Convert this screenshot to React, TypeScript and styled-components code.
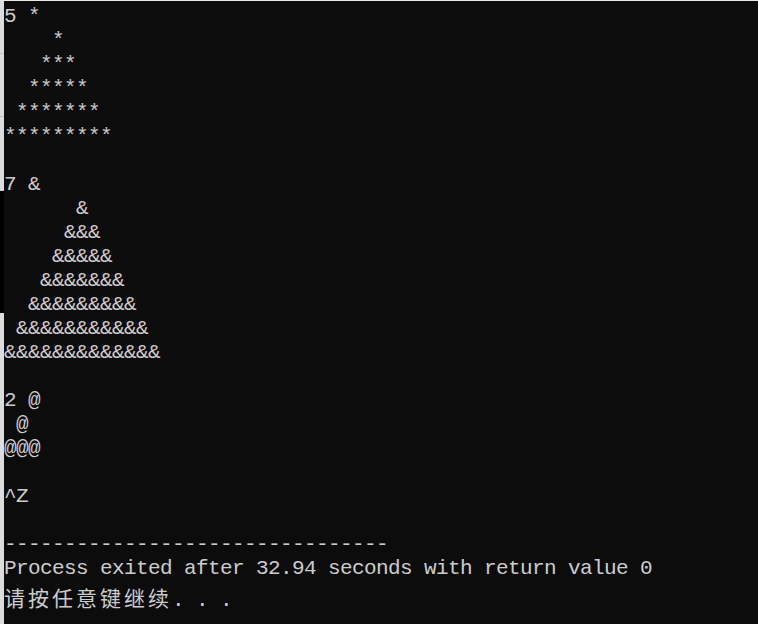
import React from "react";
import styled, { createGlobalStyle } from "styled-components";

const Global = createGlobalStyle`
  html, body { margin: 0; padding: 0; background: #0c0c0c; }
  body { width: 758px; height: 624px; overflow: hidden; }
`;

const Screen = styled.div`
  width: 758px;
  height: 624px;
  display: flex;
  flex-direction: column;
  background: #0c0c0c;
`;

const TopEdge = styled.div`
  height: 1px;
  background: #e8e8e8;
  flex: none;
`;

const Body = styled.div`
  flex: 1;
  display: flex;
  min-height: 0;
`;

const Strip = styled.div`
  width: 4px;
  flex: none;
  display: flex;
  flex-direction: column;
`;

const StripPart = styled.div<{ $h: number; $dark?: boolean }>`
  height: ${(p) => p.$h}px;
  flex: none;
  background: ${(p) => (p.$dark ? "#000000" : "#dcdcdc")};
  border-bottom: ${(p) => (p.$dark ? "none" : "1px solid #c4c4c4")};
  box-sizing: border-box;
`;

const StripRest = styled.div`
  flex: 1;
  background: #dcdcdc;
`;

const Console = styled.div`
  flex: 1;
  background: #0c0c0c;
  padding: 4px 0 0 0;
  color: #cccccc;
  font-family: "Liberation Mono", "Noto Sans CJK SC", monospace;
  font-size: 21px;
  letter-spacing: -0.6px;
`;

const Line = styled.div<{ $shift?: number }>`
  height: 24px;
  line-height: 24px;
  white-space: pre;
  margin-top: ${(p) => p.$shift ?? 0}px;
`;

const Wide = styled.span`
  font-family: "Noto Sans CJK SC", sans-serif;
  font-size: 21px;
  letter-spacing: 3px;
`;

const lines: string[] = [
  "5 *",
  "    *",
  "   ***",
  "  *****",
  " *******",
  "*********",
  "",
  "7 &",
  "      &",
  "     &&&",
  "    &&&&&",
  "   &&&&&&&",
  "  &&&&&&&&&",
  " &&&&&&&&&&&",
  "&&&&&&&&&&&&&",
  "",
  "2 @",
  " @",
  "@@@",
  "",
  "^Z",
  "",
  "--------------------------------",
  "Process exited after 32.94 seconds with return value 0",
];

export default function App() {
  return (
    <>
      <Global />
      <Screen>
        <TopEdge />
        <Body>
          <Strip>
            <StripPart $h={53} />
            <StripPart $h={63} />
            <StripPart $h={74} />
            <StripPart $h={122} $dark />
            <StripRest />
          </Strip>
          <Console>
            {lines.map((l, i) => (
              <Line key={i}>{l}</Line>
            ))}
            <Line $shift={4}>
              <Wide>请按任意键继续</Wide>. . .
            </Line>
          </Console>
        </Body>
      </Screen>
    </>
  );
}
